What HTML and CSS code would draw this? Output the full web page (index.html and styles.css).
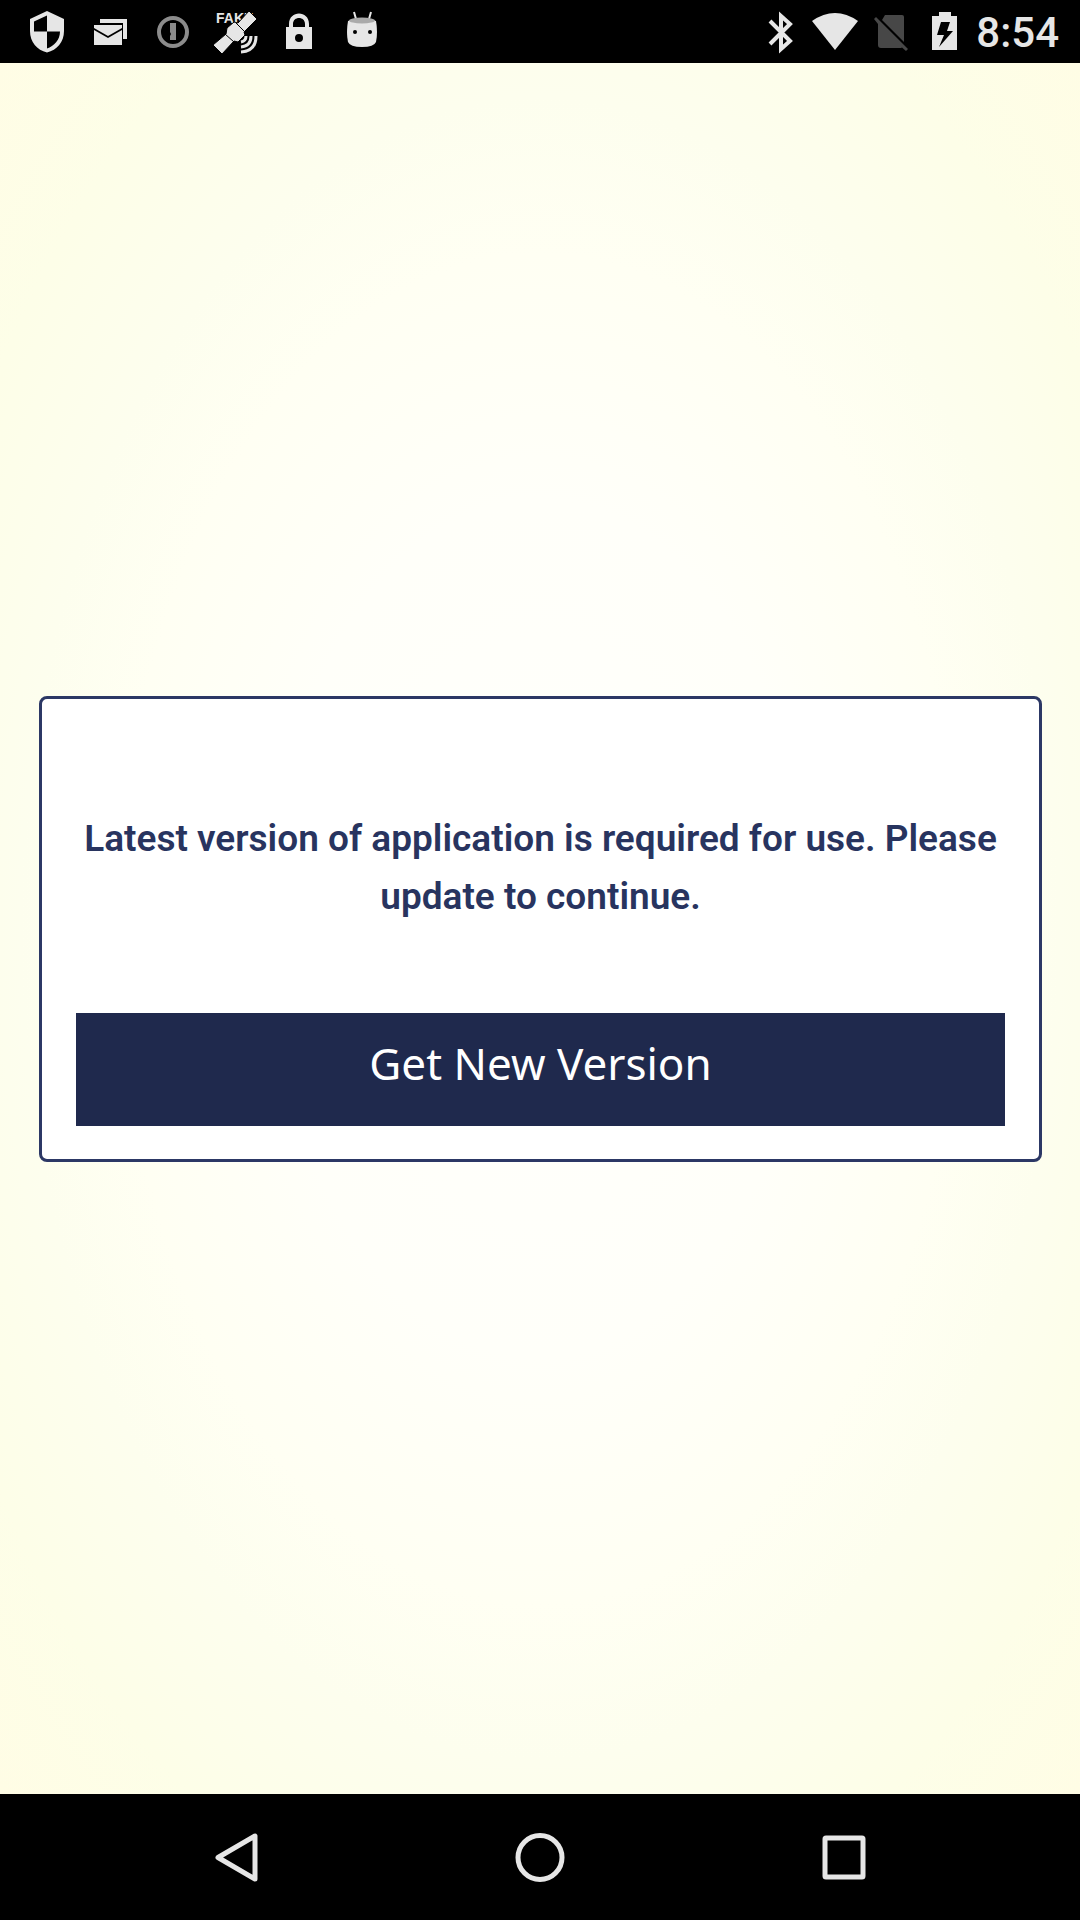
FILE: index.html
```html
<!DOCTYPE html>
<html lang="en">
<head>
<meta charset="utf-8">
<meta name="viewport" content="width=device-width, initial-scale=1">
<title>Update required</title>
<link rel="stylesheet" href="styles.css">
</head>
<body>
<header class="status-bar">
  <div class="notifications">
    <svg class="status-icon" viewBox="0 0 48 48" aria-hidden="true">
      <path fill-rule="evenodd" d="M24 3 41 11V23C41 34 34 42 24 44.500C14 42 7 34 7 23V11ZM24 7.500 11 13.500V23.500H24ZM24 23.500V40.500C31 38 37 32 37 23.500Z"/>
    </svg>
    <svg class="status-icon" viewBox="0 0 48 48" aria-hidden="true">
      <path d="M14 15V11H41V31H37V15Z"/>
      <path d="M8 17H36V20L22 28 8 20Z"/>
      <path d="M8 22 22 30 36 22V37H8Z"/>
    </svg>
    <svg class="status-icon icon-muted" viewBox="0 0 48 48" aria-hidden="true">
      <circle class="ring" cx="24" cy="24" r="14"/>
      <path d="M21 15H27V32H21V28L22 26 21 24V15Z"/>
    </svg>
    <svg class="status-icon" viewBox="0 0 48 48" aria-hidden="true">
      <text class="badge-text" x="4" y="15">FAKE</text>
      <path class="satellite" d="M37 3 45 11 32 24 33 27 26 34 22 33 10 46 1 37 14 26 15 20 22 14 26 15Z"/>
      <path class="cut" d="M13 26 22 34M24 15 33 24"/>
      <path class="waves" d="M29 34Q34 33 34 28M29 39Q39 38 39 28M29 44Q44 43 44 28"/>
    </svg>
    <svg class="status-icon" viewBox="0 0 48 48" aria-hidden="true">
      <path fill-rule="evenodd" d="M11 19H14V16C14 2 34 2 34 16V19H37V41H11ZM18 19H30V16C30 8 18 8 18 16ZM24 26A4 4 0 1 0 24 34A4 4 0 1 0 24 26Z"/>
    </svg>
    <svg class="status-icon" viewBox="0 0 48 48" aria-hidden="true">
      <path class="antenna" d="M16 4 18 11M33 4 31 11"/>
      <path d="M10 13Q24 7 38 13Q40 24 38 34Q36 39 24 39Q12 39 10 34Q8 24 10 13Z"/>
      <ellipse class="crown" cx="24" cy="12.500" rx="13" ry="3"/>
      <circle class="eye" cx="17" cy="24" r="2"/>
      <circle class="eye" cx="32" cy="24" r="2"/>
    </svg>
  </div>
  <div class="system">
    <svg class="status-icon" viewBox="0 0 48 48" aria-hidden="true">
      <path class="bluetooth" d="M14 13 34 33 25 41V8L34 16 14 36"/>
    </svg>
    <svg class="status-icon" viewBox="0 0 48 48" aria-hidden="true">
      <path d="M1 13Q24-3 47 13L24 42Z"/>
    </svg>
    <svg class="status-icon icon-off" viewBox="0 0 48 48" aria-hidden="true">
      <path d="M19 7H36Q38 7 38 9V34L16 12Z"/>
      <path d="M10 9 42 41 40 43 36 39.500Q35 40 34 40H15Q12 40 12 37V16L8 11Z"/>
    </svg>
    <svg class="status-icon" viewBox="0 0 48 48" aria-hidden="true">
      <path fill-rule="evenodd" d="M11 8H18V4H30V8H36V42H11ZM20 14 16 27H23L18 39 32 23H26L29 14Z"/>
    </svg>
    <time class="clock">8:54</time>
  </div>
</header>

<main class="screen">
  <section class="dialog">
    <p class="message">Latest version of application is required for use. Please update to continue.</p>
    <button class="update-button" type="button">Get New Version</button>
  </section>
</main>

<nav class="nav-bar" aria-label="System navigation">
  <button class="nav-button" type="button" aria-label="Back">
    <svg class="nav-icon" viewBox="0 0 56 56" aria-hidden="true"><path d="M45 7V50L8 28.500Z"/></svg>
  </button>
  <button class="nav-button" type="button" aria-label="Home">
    <svg class="nav-icon" viewBox="0 0 56 56" aria-hidden="true"><circle cx="28" cy="28.500" r="22"/></svg>
  </button>
  <button class="nav-button" type="button" aria-label="Recent apps">
    <svg class="nav-icon" viewBox="0 0 56 56" aria-hidden="true"><rect x="11" y="9" width="38" height="39" rx="1"/></svg>
  </button>
</nav>
</body>
</html>
```
FILE: styles.css
```css
* {
  box-sizing: border-box;
}

body {
  margin: 0;
  min-height: 100vh;
  display: flex;
  flex-direction: column;
  font-family: Roboto, "Liberation Sans", sans-serif;
}

.status-bar {
  display: flex;
  justify-content: space-between;
  align-items: center;
  height: 63px;
  padding: 0 21px 0 23px;
  background: #000;
  color: #e6e6e6;
}

.notifications,
.system {
  display: flex;
  align-items: center;
}

.notifications {
  gap: 15px;
}

.system {
  gap: 7px;
}

.status-icon {
  width: 48px;
  height: 48px;
  fill: #e6e6e6;
  overflow: visible;
}

.icon-muted {
  fill: #8c8c8c;
}

.icon-off {
  fill: #474747;
}

.ring {
  fill: none;
  stroke: #8c8c8c;
  stroke-width: 4;
}

.badge-text {
  font: bold 14px "Liberation Sans", sans-serif;
}

.satellite {
  stroke: #000;
  stroke-width: 1;
}

.cut {
  fill: none;
  stroke: #000;
  stroke-width: 1;
}

.waves {
  fill: none;
  stroke: #e6e6e6;
  stroke-width: 3;
}

.antenna {
  fill: none;
  stroke: #e6e6e6;
  stroke-width: 2;
}

.crown {
  fill: #aaa;
}

.eye {
  fill: #000;
}

.bluetooth {
  fill: none;
  stroke: #e6e6e6;
  stroke-width: 4;
}

.clock {
  padding-top: 2px;
  font-size: 42px;
  line-height: 48px;
  font-weight: 500;
}

.screen {
  flex: 1;
  display: flex;
  flex-direction: column;
  justify-content: center;
  padding: 39px 38px 39px 39px;
  background: radial-gradient(ellipse farthest-corner at center, #fffffc 0%, #fffff9 35%, #fffff3 55%, #fdfeee 68%, #fdfee8 84%, #fffde5 100%);
}

.dialog {
  padding: 111px 34px 33px;
  border: 3px solid #2c3865;
  border-radius: 8px;
  background: #fff;
}

.message {
  margin: 0 0 87px;
  color: #28345f;
  font-size: 37px;
  line-height: 58px;
  font-weight: 600;
  text-align: center;
}

.update-button {
  display: block;
  width: 100%;
  padding: 20px 0 33px;
  border: 0;
  background: #1f294d;
  color: #fff;
  font-family: "Noto Sans", sans-serif;
  font-size: 44px;
  line-height: 60px;
}

.nav-bar {
  display: flex;
  justify-content: center;
  height: 126px;
  background: #000;
}

.nav-button {
  flex: 0 0 28%;
  display: flex;
  align-items: center;
  justify-content: center;
  padding: 0;
  border: 0;
  background: none;
}

.nav-icon {
  width: 56px;
  height: 56px;
  fill: none;
  stroke: #e6e6e6;
  stroke-width: 5;
  stroke-linejoin: round;
}
```
